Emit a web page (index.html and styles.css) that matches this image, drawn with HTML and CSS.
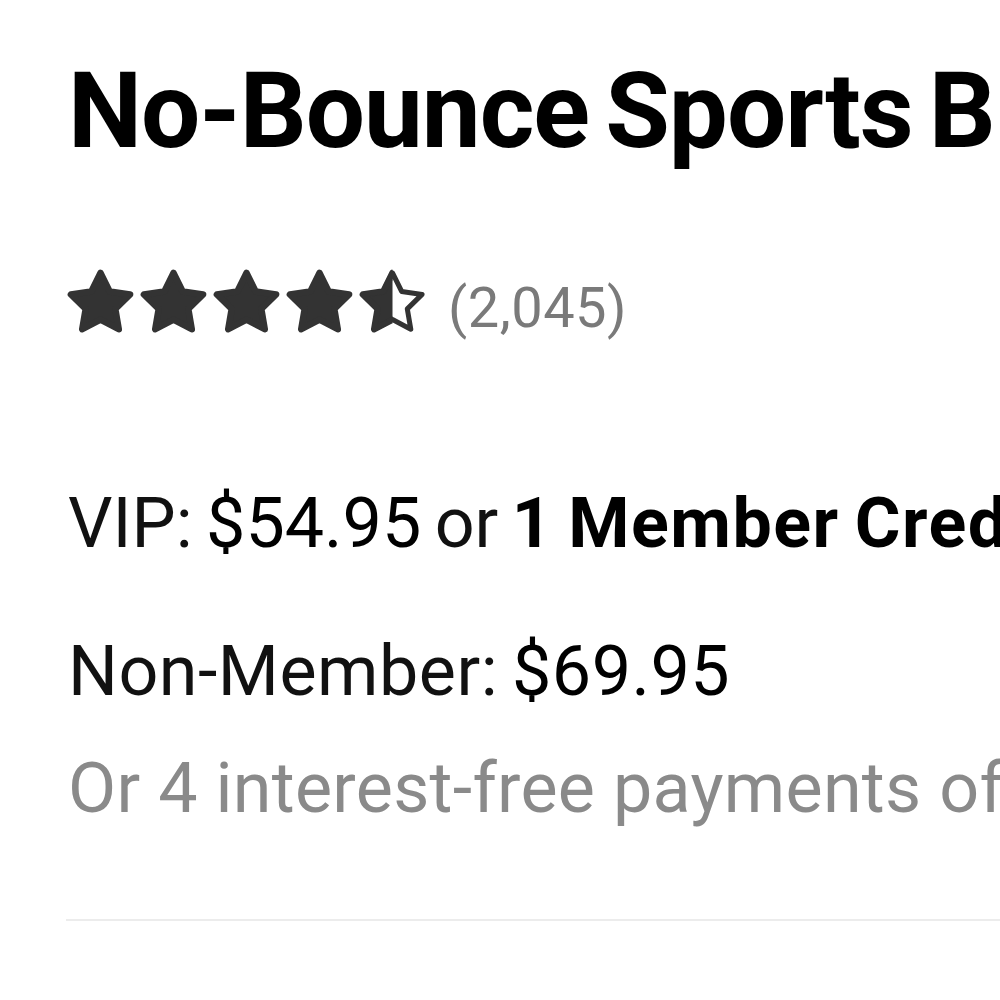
FILE: index.html
```html
<!DOCTYPE html>
<html lang="en">
<head>
<meta charset="utf-8">
<title>No-Bounce Sports Bra</title>
<link rel="stylesheet" href="styles.css">
</head>
<body>
<main class="product">
  <h1 class="title">No-Bounce Sports Bra</h1>
  <div class="rating">
    <div class="stars">
      <svg class="star" viewBox="0 0 24 24"><polygon class="full" points="12,2 15.09,8.26 22,9.27 17,14.14 18.18,21.02 12,17.77 5.82,21.02 7,14.14 2,9.27 8.91,8.26"/></svg>
      <svg class="star" viewBox="0 0 24 24"><polygon class="full" points="12,2 15.09,8.26 22,9.27 17,14.14 18.18,21.02 12,17.77 5.82,21.02 7,14.14 2,9.27 8.91,8.26"/></svg>
      <svg class="star" viewBox="0 0 24 24"><polygon class="full" points="12,2 15.09,8.26 22,9.27 17,14.14 18.18,21.02 12,17.77 5.82,21.02 7,14.14 2,9.27 8.91,8.26"/></svg>
      <svg class="star" viewBox="0 0 24 24"><polygon class="full" points="12,2 15.09,8.26 22,9.27 17,14.14 18.18,21.02 12,17.77 5.82,21.02 7,14.14 2,9.27 8.91,8.26"/></svg>
      <svg class="star" viewBox="0 0 24 24">
        <defs><clipPath id="halfclip"><rect x="0" y="0" width="12" height="24"/></clipPath></defs>
        <polygon class="full" clip-path="url(#halfclip)" points="12,2 15.09,8.26 22,9.27 17,14.14 18.18,21.02 12,17.77 5.82,21.02 7,14.14 2,9.27 8.91,8.26"/>
        <polygon class="outline" points="12,2 15.09,8.26 22,9.27 17,14.14 18.18,21.02 12,17.77 5.82,21.02 7,14.14 2,9.27 8.91,8.26"/>
      </svg>
    </div>
    <span class="count">(2,045)</span>
  </div>
  <p class="price vip">VIP: <span class="amount">$54.95</span> or <strong>1 Member Credit</strong></p>
  <p class="price non">Non-Member: <span class="amount">$69.95</span></p>
  <p class="installments">Or 4 interest-free payments of $13.74</p>
  <hr class="divider">
</main>
</body>
</html>
```
FILE: styles.css
```css
html, body {
  margin: 0;
  padding: 0;
  background: #fff;
  overflow: hidden;
}

body {
  font-family: Roboto, "Liberation Sans", sans-serif;
  color: #111;
}

.product {
  padding: 49px 0 0 68px;
  white-space: nowrap;
  width: 1400px;
}

.title {
  margin: 0;
  font-size: 105px;
  line-height: 126px;
  font-weight: 700;
  color: #000;
  letter-spacing: -1px;
  word-spacing: -9px;
}

.rating {
  display: flex;
  align-items: flex-start;
  height: 60px;
  margin-top: 98px;
}

.stars {
  display: flex;
  gap: 2px;
  margin-left: -3px;
  margin-top: -6px;
}

.star {
  width: 71px;
  height: 71px;
  display: block;
}

.star .full {
  fill: #333;
  stroke: #333;
  stroke-width: 2.2;
  stroke-linejoin: round;
}

.star .outline {
  fill: none;
  stroke: #333;
  stroke-width: 1.7;
  stroke-linejoin: round;
}

.count {
  margin-left: 20px;
  margin-top: 5px;
  font-size: 56px;
  line-height: 60px;
  color: #7a7a7a;
  font-weight: 400;
  letter-spacing: 0.5px;
}

.price {
  margin: 0;
  font-size: 70px;
  line-height: 100px;
  color: #111;
  font-weight: 400;
  word-spacing: -4px;
}

.vip {
  margin-top: 140px;
}

.non {
  margin-top: 48px;
  letter-spacing: 0.5px;
}

.amount {
  color: #000;
}

.price strong {
  font-weight: 700;
  color: #000;
  letter-spacing: 1.5px;
}

.installments {
  margin: 17px 0 0;
  font-size: 70px;
  line-height: 100px;
  color: #8a8a8a;
  font-weight: 400;
  letter-spacing: 0.3px;
}

.divider {
  margin: 81px 0 0 -2px;
  border: 0;
  height: 2px;
  background: #ececec;
}
```
